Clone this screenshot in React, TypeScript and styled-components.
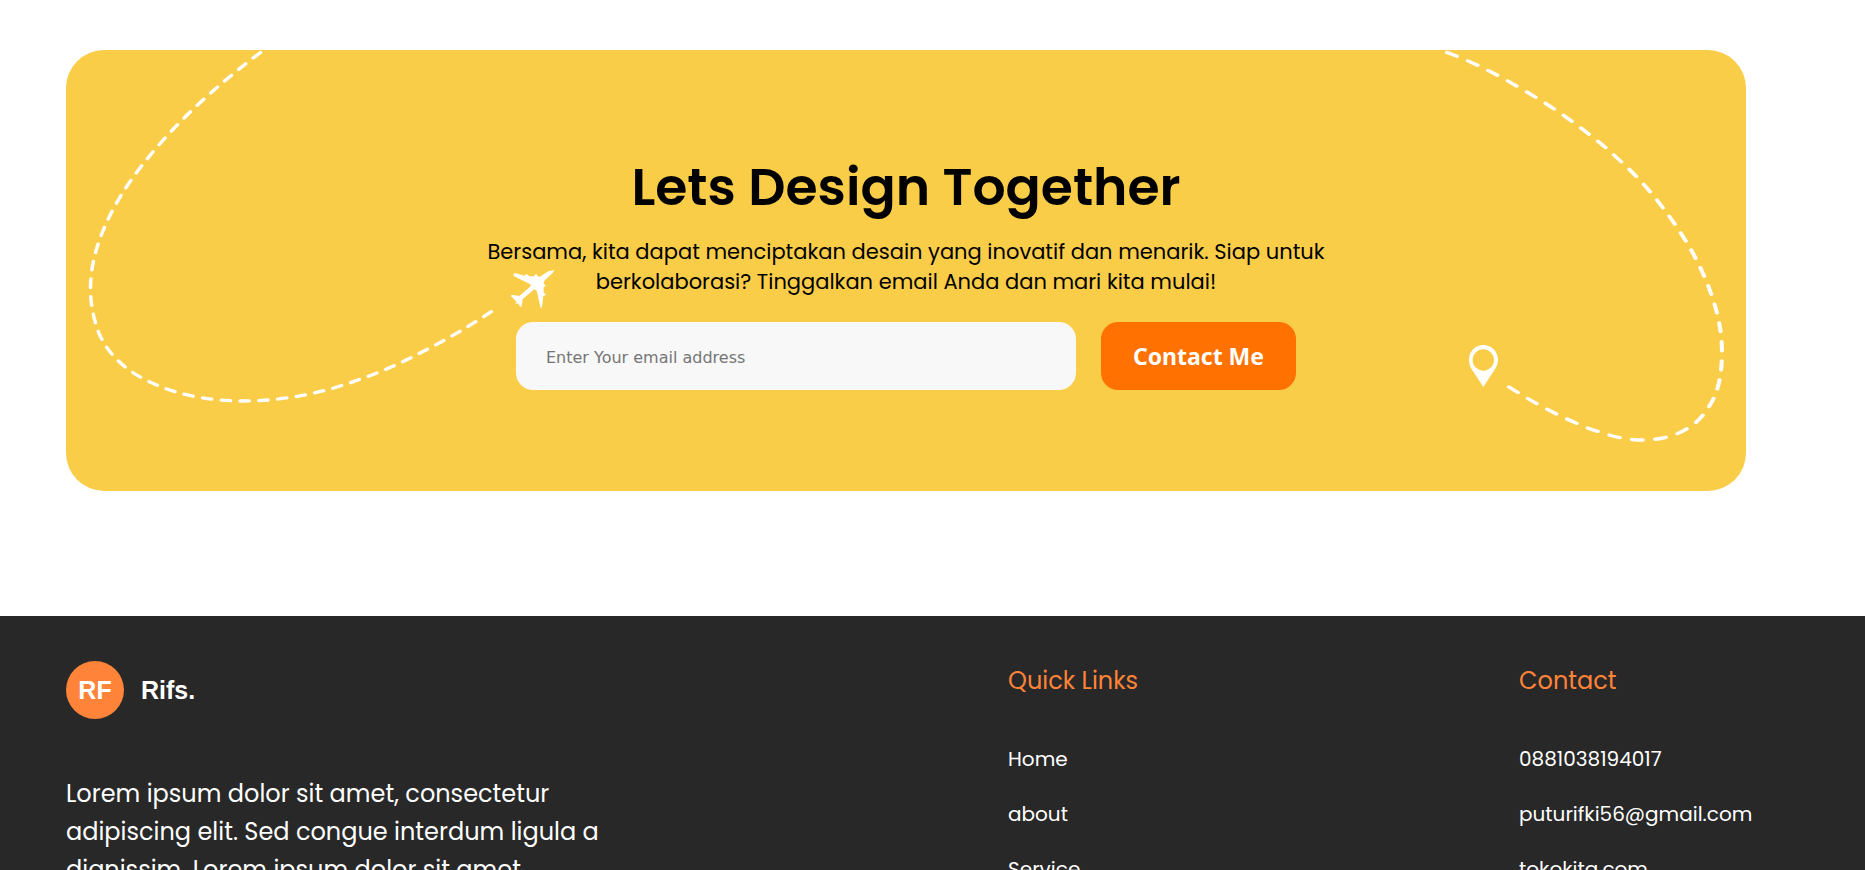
import React from "react";
import styled, { createGlobalStyle } from "styled-components";

const GlobalStyle = createGlobalStyle`
  *, *::before, *::after { box-sizing: border-box; }
  body {
    margin: 0;
    background: #ffffff;
    color: #000000;
    font-family: Poppins, Inter, sans-serif;
  }
  h1, h2, p, ul { margin: 0; padding: 0; }
  ul { list-style: none; }
`;

const Page = styled.div`
  height: 100vh;
  overflow: hidden;
`;

const Main = styled.main`
  padding: 50px 119px 125px 66px;
`;

const Banner = styled.section`
  position: relative;
  display: flex;
  flex-direction: column;
  align-items: center;
  padding: 100px 40px 101px;
  border-radius: 38px;
  background: #facd49;
  overflow: hidden;
`;

const Trail = styled.svg<{ $side: "left" | "right" }>`
  position: absolute;
  top: 0;
  ${(p) => p.$side}: 0;
  pointer-events: none;
`;

const Title = styled.h1`
  position: relative;
  margin-bottom: 13px;
  font-size: 52px;
  line-height: 74px;
  font-weight: 600;
  text-align: center;
`;

const Lead = styled.p`
  position: relative;
  max-width: 880px;
  margin-bottom: 25px;
  font-size: 21px;
  line-height: 30px;
  text-align: center;
`;

const Form = styled.form`
  position: relative;
  display: flex;
  justify-content: center;
  gap: 25px;
  width: 100%;
`;

const EmailInput = styled.input`
  width: 35%;
  height: 68px;
  padding: 2px 30px 0;
  border: 0;
  border-radius: 17px;
  background: #f8f8f8;
  font: 400 16px "DejaVu Sans", sans-serif;

  &::placeholder { color: #757575; }
`;

const SubmitButton = styled.button`
  width: 195px;
  height: 68px;
  padding: 0;
  border: 0;
  border-radius: 17px;
  background: #ff7100;
  color: #ffffff;
  font: 700 23px Tahoma, "Noto Sans", sans-serif;
  cursor: pointer;
`;

const Footer = styled.footer`
  display: grid;
  grid-template-columns: minmax(0, 942fr) minmax(0, 511fr) minmax(0, 227fr);
  padding: 45px 119px 60px 66px;
  background: #282828;
  color: #ffffff;
`;

const Column = styled.div`
  min-width: 0;
`;

const Brand = styled.a`
  display: flex;
  align-items: center;
  gap: 17px;
  margin-bottom: 56px;
  color: #ffffff;
  font: 700 25px "Liberation Sans", Arial, sans-serif;
  text-decoration: none;
`;

const Badge = styled.span`
  display: flex;
  align-items: center;
  justify-content: center;
  width: 58px;
  height: 58px;
  border-radius: 50%;
  background: #ff8439;
`;

const About = styled.p`
  max-width: 564px;
  font-size: 24px;
  line-height: 38px;
`;

const Heading = styled.h2`
  margin-bottom: 44px;
  color: #ff8439;
  font-size: 24px;
  line-height: 39px;
  font-weight: 400;
`;

const LinkList = styled.ul`
  display: flex;
  flex-direction: column;
  gap: 25px;
`;

const Item = styled.li`
  display: flex;
`;

const FooterLink = styled.a`
  color: #ffffff;
  font-size: 20px;
  line-height: 30px;
  text-decoration: none;
  white-space: nowrap;
`;

function PlaneTrail() {
  return (
    <Trail $side="left" width="520" height="441" viewBox="0 0 520 441" aria-hidden="true">
      <path
        transform="scale(1.06 1)"
        d="M183.500 2.500C149 30 120 57 93.400 88C77.400 107 62.300 127 51 147C34 177 23.100 209 23.100 238C23.100 255 26 268 30.600 282C39 304 56.600 321 79.200 332C106.600 346 137.700 351 167 351C197.200 351 227.400 346 255.700 337C283 328 309.400 317 334 303C358.500 290 381 276 401.500 261.500"
        fill="none"
        stroke="#ffffff"
        strokeWidth="3.300"
        strokeLinecap="round"
        pathLength="752"
        strokeDasharray="8.700 8.990"
      />
      <path
        transform="translate(434 205) scale(.3333)"
        d="M40 56L47 55L74 62L79 57L85 60L86 64L102 64L107 57L112 60L113 65L120 65L145 49L163 45L158 54L133 77L131 87L137 91L136 94L131 96L131 113L137 117L136 121L130 123L126 156L122 160L110 107L103 103L68 132L65 154L61 156L54 145L46 147L50 140L33 124L35 119L58 123L92 94L91 88L41 63Z"
        fill="#ffffff"
      />
    </Trail>
  );
}

function PinTrail() {
  return (
    <Trail $side="right" width="346" height="441" viewBox="0 0 346 441" aria-hidden="true">
      <path
        transform="scale(1.22 1)"
        d="M38.500 2.500C55.700 10 72.100 20 88.500 31C104.100 42 119.700 53 133.600 65C148.400 78 163.100 91 176.200 106C191 122 204.100 139 215.600 158C227 176 237.700 196 245.900 217C257.400 247 263.900 274 263.900 302C263.900 322 261.500 341 254.100 355C249.200 365 243.400 373 236.100 378C226.200 386 213.100 390 198.400 390C186.900 390 175.400 387 163.900 382C154.900 379 145.900 374 136.900 369C120.500 360 104.900 349 89.300 337"
        fill="none"
        stroke="#ffffff"
        strokeWidth="3.300"
        strokeLinecap="round"
        pathLength="636"
        strokeDasharray="9 10"
      />
      <path
        d="M83.300 295C75.200 295 69 301.600 69 310C69 314 70.500 317.500 72.500 320.500L83.300 337L94.100 320.500C96.100 317.500 98 314 98 310C98 301.600 91.500 295 83.300 295ZM83.300 299.300A10.700 10.700 0 1 1 83.300 320.700A10.700 10.700 0 1 1 83.300 299.300Z"
        fill="#ffffff"
        fillRule="evenodd"
      />
    </Trail>
  );
}

const quickLinks = [
  { label: "Home", href: "#home" },
  { label: "about", href: "#about" },
  { label: "Service", href: "#service" },
];

const contacts = [
  { label: "0881038194017", href: "tel:0881038194017" },
  { label: "puturifki56@gmail.com", href: "mailto:puturifki56@gmail.com" },
  { label: "tokokita.com", href: "#tokokita" },
];

function LinkColumn({ title, links }: { title: string; links: { label: string; href: string }[] }) {
  return (
    <Column>
      <Heading>{title}</Heading>
      <LinkList>
        {links.map((link) => (
          <Item key={link.label}>
            <FooterLink href={link.href}>{link.label}</FooterLink>
          </Item>
        ))}
      </LinkList>
    </Column>
  );
}

export default function App() {
  return (
    <Page>
      <GlobalStyle />
      <Main>
        <Banner>
          <PlaneTrail />
          <PinTrail />
          <Title>Lets Design Together</Title>
          <Lead>
            Bersama, kita dapat menciptakan desain yang inovatif dan menarik. Siap untuk
            berkolaborasi? Tinggalkan email Anda dan mari kita mulai!
          </Lead>
          <Form onSubmit={(e) => e.preventDefault()}>
            <EmailInput type="email" aria-label="Email address" placeholder="Enter Your email address" />
            <SubmitButton type="submit">Contact Me</SubmitButton>
          </Form>
        </Banner>
      </Main>
      <Footer>
        <Column>
          <Brand href="#home">
            <Badge>RF</Badge>
            <span>Rifs.</span>
          </Brand>
          <About>
            Lorem ipsum dolor sit amet, consectetur adipiscing elit. Sed congue interdum ligula a
            dignissim. Lorem ipsum dolor sit amet
          </About>
        </Column>
        <LinkColumn title="Quick Links" links={quickLinks} />
        <LinkColumn title="Contact" links={contacts} />
      </Footer>
    </Page>
  );
}
